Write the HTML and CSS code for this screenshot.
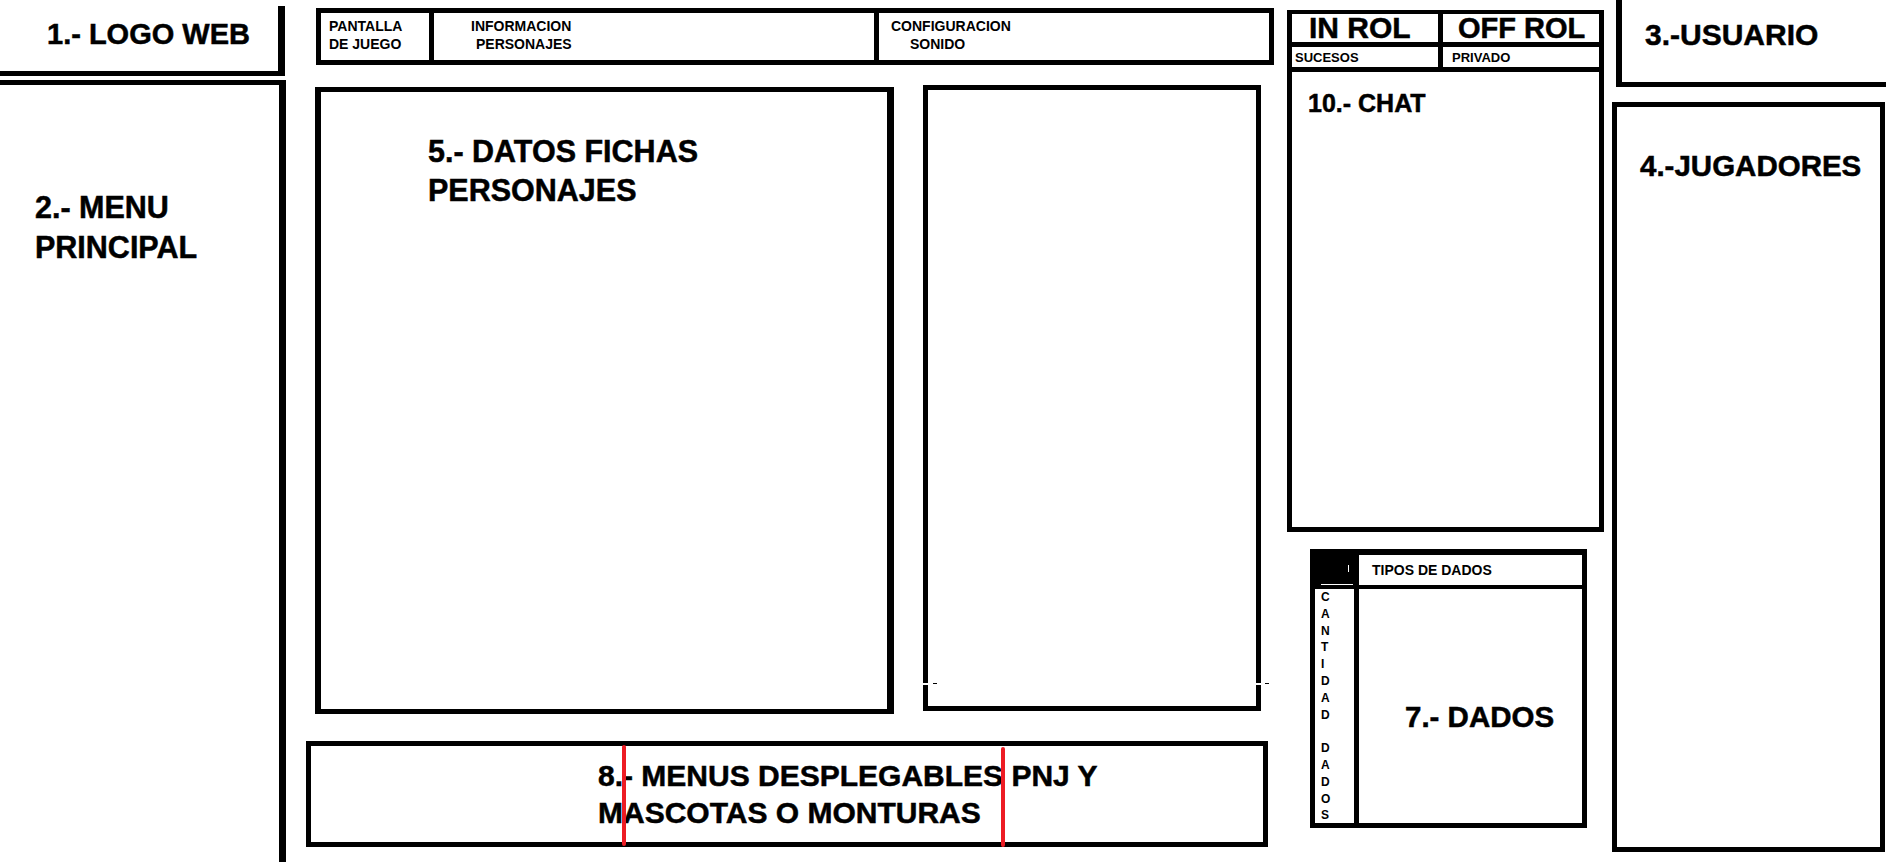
FILE: index.html
```html
<!DOCTYPE html>
<html lang="es">
<head>
  <meta charset="UTF-8" />
  <meta name="viewport" content="width=device-width, initial-scale=1.0"/>
  <title>Boceto pantalla de juego</title>
  <link rel="stylesheet" href="styles.css">
</head>
<body>
  <div class="page">
    <div class="side">
      <div class="box logo"><span class="label logo-text">1.- LOGO WEB</span></div>
      <div class="box menu"><span class="label menu-text">2.- MENU<br>PRINCIPAL</span></div>
    </div>

    <div class="main">
      <div class="box tabs">
        <div class="tab tab-game"><span>PANTALLA</span><span>DE JUEGO</span></div>
        <div class="tab tab-info"><span>INFORMACION</span><span class="second">PERSONAJES</span></div>
        <div class="tab tab-sound"><span>CONFIGURACION</span><span class="second">SONIDO</span></div>
      </div>

      <div class="panels">
        <div class="box sheet"><span class="label sheet-text">5.- DATOS FICHAS<br>PERSONAJES</span></div>
        <div class="box extra"></div>
      </div>

      <div class="box bar">
        <span class="label bar-text">8.- MENUS DESPLEGABLES PNJ Y<br>MASCOTAS O MONTURAS</span>
        <span class="cut cut-a"></span>
        <span class="cut cut-b"></span>
      </div>
    </div>

    <div class="chatcol">
      <div class="box chat">
        <div class="chat-row big">
          <div class="chat-cell in"><span class="label rol-text">IN ROL</span></div>
          <div class="chat-cell off"><span class="label rol-text">OFF ROL</span></div>
        </div>
        <div class="chat-row small">
          <div class="chat-cell events">SUCESOS</div>
          <div class="chat-cell private">PRIVADO</div>
        </div>
        <div class="chat-body"><span class="label chat-text">10.- CHAT</span></div>
      </div>

      <div class="box dice">
        <div class="dice-corner"></div>
        <div class="dice-types">TIPOS DE DADOS</div>
        <div class="dice-count">C<br>A<br>N<br>T<br>I<br>D<br>A<br>D<br><br>D<br>A<br>D<br>O<br>S</div>
        <div class="dice-body"><span class="label dice-text">7.- DADOS</span></div>
      </div>
    </div>

    <div class="right">
      <div class="box user"><span class="label user-text">3.-USUARIO</span></div>
      <div class="box players"><span class="label players-text">4.-JUGADORES</span></div>
    </div>
  </div>
</body>
</html>
```

FILE: styles.css
```css
body {
  margin: 0;
  background: #fff;
  color: #000;
  font-family: "Liberation Sans", Arial, sans-serif;
  font-weight: bold;
}
.page { display: flex; width: 1886px; height: 862px; overflow: hidden; }
.box { box-sizing: border-box; border: 0 solid #000; }
.label { display: inline-block; white-space: nowrap; -webkit-text-stroke: 0.5px #000; }

/* left column */
.side { width: 286px; flex-shrink: 0; display: flex; flex-direction: column; }
.logo {
  margin-top: 6px; width: 285px; height: 70px;
  border-right-width: 7px; border-bottom-width: 5px;
  padding: 14px 0 0 47px;
}
.logo-text { font-size: 29px; line-height: 29px; }
.menu {
  margin-top: 4px; flex: 1;
  border-top-width: 5px; border-right-width: 7px;
  padding: 102px 0 0 35px;
}
.menu-text { font-size: 30.5px; line-height: 40px; }

/* middle column */
.main { margin-left: 20px; width: 968px; flex-shrink: 0; display: flex; flex-direction: column; }
.tabs {
  margin: 8px 0 0 10px; width: 958px; height: 57px;
  border-width: 5px; display: flex;
  font-size: 14px; line-height: 18px;
}
.tab { box-sizing: border-box; padding-top: 4px; }
.tab span { display: block; }
.tab-game { width: 113px; border-right: 5px solid #000; padding-left: 8px; }
.tab-info { width: 445px; border-right: 5px solid #000; padding-left: 37px; }
.tab-info .second { padding-left: 5px; }
.tab-sound { flex: 1; padding-left: 12px; }
.tab-sound .second { padding-left: 19px; }

.panels { display: flex; align-items: flex-start; height: 649px; }
.sheet {
  margin: 22px 0 0 9px; width: 579px; height: 627px;
  border-width: 5px 7px 5px 6px;
  padding: 40px 0 0 107px;
}
.sheet-text { font-size: 30.5px; line-height: 38.5px; }
.extra {
  position: relative;
  margin: 20px 0 0 29px; width: 338px; height: 626px; border-width: 5px;
}
/* small breaks drawn in the side borders */
.extra::before {
  content: ""; position: absolute; left: -5px; top: 593px;
  width: 5px; height: 2px; background: #fff;
  box-shadow: 333px 0 0 #fff;
}
.extra::after {
  content: ""; position: absolute; left: 5px; top: 593px;
  width: 4px; height: 1px; background: #000;
  box-shadow: 332px 0 0 #000;
}

.bar {
  position: relative;
  margin-top: 27px; width: 962px; height: 106px;
  border-width: 5px;
  padding: 11px 0 0 287px;
}
.bar-text { font-size: 30px; line-height: 37px; }
.cut { position: absolute; width: 4px; background: #ed1c24; border-radius: 2px; }
.cut-a { left: 311px; top: -1px; height: 101px; }
.cut-b { left: 690px; top: 1px; height: 100px; }

/* chat + dice column */
.chatcol { margin-left: 13px; width: 317px; flex-shrink: 0; display: flex; flex-direction: column; }
.chat {
  margin-top: 10px; height: 522px;
  border-width: 4px 5px 5px 5px;
  display: flex; flex-direction: column;
}
.chat-row { display: flex; box-sizing: border-box; border-bottom: 5px solid #000; }
.chat-row.big { height: 33px; font-size: 30px; line-height: 28px; }
.chat-row.small { height: 25px; font-size: 13px; line-height: 13px; }
.chat-cell { box-sizing: border-box; }
.chat-cell.in, .chat-cell.events { width: 151px; border-right: 5px solid #000; }
.small .chat-cell { padding-top: 4px; }
.chat-cell.in { padding-left: 17px; }
.chat-cell.off { padding-left: 15px; }
.chat-cell.off .rol-text { font-size: 29px; }
.chat-cell.events { padding-left: 3px; }
.chat-cell.private { padding-left: 9px; }
.chat-body { padding: 19px 0 0 16px; }
.chat-text { font-size: 25px; line-height: 25px; }

.dice {
  margin: 17px 0 0 23px; width: 277px; height: 279px;
  border-width: 6px 5px 5px 5px;
  display: grid;
  grid-template-columns: 44px 1fr;
  grid-template-rows: 34px 1fr;
}
.dice-corner { background: #000; position: relative; }
.dice-corner::before {
  content: ""; position: absolute; left: 33px; top: 10px;
  width: 1px; height: 7px; background: #fff;
}
.dice-corner::after {
  content: ""; position: absolute; left: 6px; top: 29px;
  width: 32px; height: 1px; background: #fff;
}
.dice-types {
  border-bottom: 4px solid #000;
  padding: 8px 0 0 13px;
  font-size: 14px; line-height: 14px;
}
.dice-count {
  border-right: 5px solid #000;
  padding-left: 6px;
  font-size: 12px; line-height: 16.8px;
}
.dice-body { padding: 113px 0 0 46px; }
.dice-text { font-size: 29.5px; line-height: 29.5px; }

/* right column */
.right { margin-left: 8px; flex: 1; display: flex; flex-direction: column; }
.user {
  margin-left: 4px; height: 87px;
  border-width: 0 0 5px 6px;
  padding: 20px 0 0 23px;
}
.user-text { font-size: 30px; line-height: 30px; }
.players {
  margin-top: 15px; width: 273px; height: 750px;
  border-width: 5px;
  padding: 44px 0 0 23px;
}
.players-text { font-size: 29.5px; line-height: 29.5px; }
```
